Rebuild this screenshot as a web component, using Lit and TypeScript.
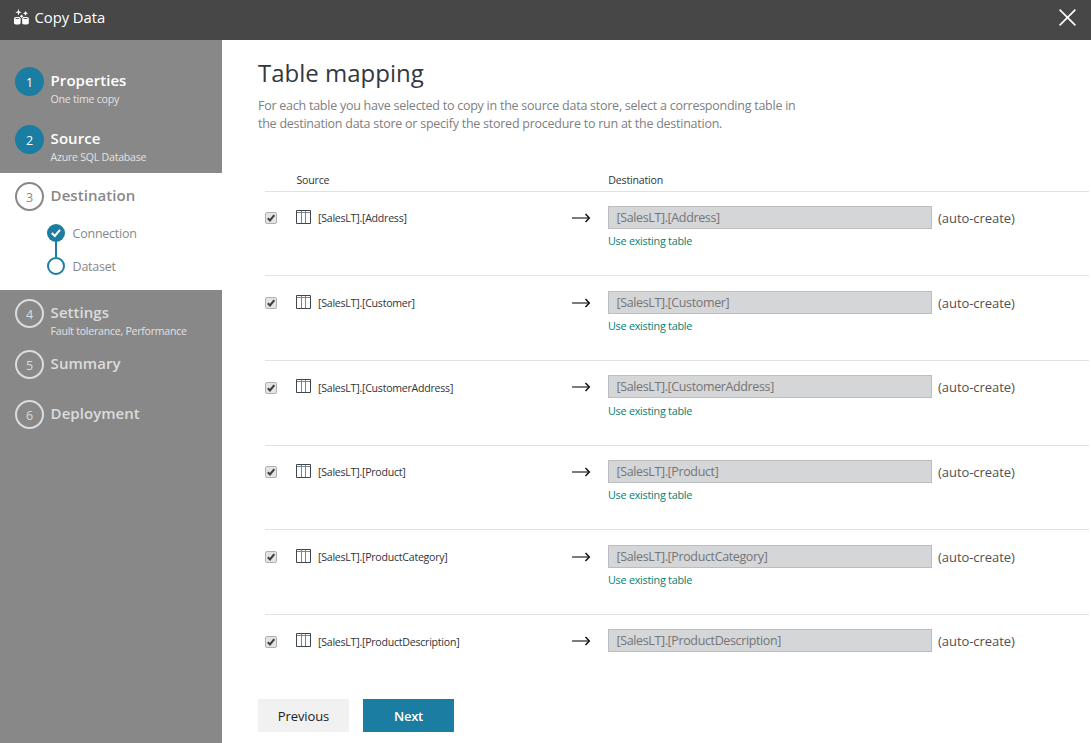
import { LitElement, html, css, svg, nothing } from "lit";
import { customElement, property } from "lit/decorators.js";
import { classMap } from "lit/directives/class-map.js";

interface Step {
  title: string;
  note?: string;
  state: "done" | "active" | "todo";
  size: string;
}

const STEPS: Step[] = [
  { title: "Properties", note: "One time copy", state: "done", size: "tall" },
  { title: "Source", note: "Azure SQL Database", state: "done", size: "medium" },
  { title: "Destination", state: "active", size: "open" },
  { title: "Settings", note: "Fault tolerance, Performance", state: "todo", size: "after" },
  { title: "Summary", state: "todo", size: "short" },
  { title: "Deployment", state: "todo", size: "short" },
];

const TABLES = ["Address", "Customer", "CustomerAddress", "Product", "ProductCategory", "ProductDescription"];

@customElement("wizard-steps")
export class WizardSteps extends LitElement {
  static styles = css`
    :host { display: block; background: #888; color: #fff; padding-top: 27px; box-sizing: border-box; }
    .step { display: flex; gap: 6.6px; padding-left: 15px; box-sizing: border-box; }
    .tall { height: 58px; }
    .medium { height: 48px; }
    .open { height: 117px; padding-top: 9px; background: #fff; color: #888; }
    .after { height: 60px; padding-top: 9px; }
    .short { height: 50px; }
    .todo { color: #dcdcdc; }
    .num {
      width: 29px; height: 29px; box-sizing: border-box; border-radius: 50%;
      border: 2px solid currentColor; font-size: 12.5px; line-height: 27px; text-align: center; flex: none;
    }
    .done .num { background: #1b7da1; border-color: #1b7da1; }
    .title { font-size: 15px; font-weight: 600; line-height: 20px; padding-top: 3px; letter-spacing: 0.05px; white-space: nowrap; }
    .note { font-size: 10.6px; line-height: 14px; padding-top: 2px; letter-spacing: -0.25px; color: #e2e2e2; white-space: nowrap; }
    .sub { display: flex; gap: 6.6px; margin: 18px 0 0 -4.6px; }
    .sub svg { display: block; flex: none; }
    .labels { font-size: 12.5px; letter-spacing: -0.25px; line-height: 33px; margin-top: -6px; }
  `;
  render() {
    return STEPS.map(
      (s, i) => html`<div class=${classMap({ step: true, [s.size]: true, [s.state]: true })}>
        <div class="num">${i + 1}</div>
        <div>
          <div class="title">${s.title}</div>
          ${s.note ? html`<div class="note">${s.note}</div>` : nothing}
          ${s.state === "active"
            ? html`<div class="sub">
                <svg width="20" height="53" viewBox="0 0 20 53" fill="none" stroke="#1b7da1" stroke-width="2">
                  <path d="M10 17V34" />
                  <circle cx="10" cy="10" r="9" fill="#1b7da1" stroke="none" />
                  <path d="M5.8 10l3 3 5.2-6.2" stroke="#fff" />
                  <circle cx="10" cy="43" r="8" fill="#fff" />
                </svg>
                <div class="labels"><div>Connection</div><div>Dataset</div></div>
              </div>`
            : nothing}
        </div>
      </div>`
    );
  }
}

@customElement("mapping-row")
export class MappingRow extends LitElement {
  @property() name = "";
  @property({ type: Boolean }) last = false;
  static styles = css`
    :host {
      display: grid; grid-template-columns: 31px 22px 254px 36px 324px 1fr; align-items: start;
      height: 84.667px; box-sizing: border-box; border-top: 1px solid #e2e2e2; padding-top: 14.35px;
      white-space: nowrap;
    }
    svg { display: block; }
    .check { margin-top: 6.2px; }
    .grid { margin-top: 4px; }
    .arrow { margin-top: 7.1px; }
    .src { font-size: 10.6px; letter-spacing: -0.25px; line-height: 24px; padding-top: 0.25px; color: #2f3439; }
    .field {
      height: 23px; box-sizing: border-box; border: 1px solid #bcbdc1; background: #d4d6d8; color: #757575;
      font-size: 12.5px; letter-spacing: -0.37px; line-height: 21px; padding-left: 7.5px; overflow: hidden;
    }
    .link { font-size: 10.8px; letter-spacing: -0.25px; line-height: 16px; margin-top: 4.2px; color: #008272; }
    .auto { font-size: 13px; line-height: 24px; padding-top: 0.15px; letter-spacing: -0.05px; padding-left: 6px; color: #505050; }
  `;
  render() {
    const label = `[SalesLT].[${this.name}]`;
    return html`
      <svg class="check" width="12" height="12" viewBox="0 0 12 12">
        <rect x=".5" y=".5" width="11" height="11" rx="1.5" fill="#e4e4e4" stroke="#b0b0b0" />
        <path d="M2.8 6.2L5 8.4L9.3 3.2" fill="none" stroke="#404040" stroke-width="2.1" />
      </svg>
      <svg class="grid" width="15" height="14" viewBox="0 0 15 14" fill="none">
        <path d="M5.5 1V13M9.5 1V13" stroke="#7d858c" />
        <path d="M.5 .5H14.5V13.5H.5Z" stroke="#3c4750" />
        <path d="M1 2.5H14" stroke="#7d858c" />
      </svg>
      <div class="src">${label}</div>
      <svg class="arrow" width="19" height="10" viewBox="0 0 19 10" fill="none">
        <path d="M0 5H17" stroke="#333" stroke-width="1.3" />
        <path d="M13.5 1L17.3 5L13.5 9" stroke="#111" stroke-width="1.5" />
      </svg>
      <div>
        <div class="field">${label}</div>
        ${this.last ? nothing : html`<div class="link">Use existing table</div>`}
      </div>
      <div class="auto">(auto-create)</div>
    `;
  }
}

const sparkle = (x: number, y: number, r: number) =>
  svg`<path d="M${x} ${y - r}L${x + 0.8} ${y - 0.8}L${x + r} ${y}L${x + 0.8} ${y + 0.8}L${x} ${y + r}L${x - 0.8} ${y + 0.8}L${x - r} ${y}L${x - 0.8} ${y - 0.8}Z"/>`;

@customElement("app-root")
export class AppRoot extends LitElement {
  static styles = css`
    :host {
      display: grid; grid-template: 40px 1fr / 222px 1fr; width: 1091px; height: 743px; overflow: hidden;
      background: #fff; font-family: "Open Sans", "Noto Sans", sans-serif;
    }
    header {
      grid-column: 1 / 3; display: flex; align-items: center; background: #474747; color: #fff;
      padding: 0 15px 0 14px; box-sizing: border-box;
    }
    header svg { display: block; }
    .name { font-size: 14.8px; line-height: 20px; margin: -7px auto 0 5.6px; letter-spacing: -0.05px; }
    .logo { margin-top: -7px; }
    .close { margin-top: -6px; }
    main { padding: 18px 0 0 36px; min-width: 0; white-space: nowrap; }
    h1 { margin: 0; font-size: 24px; font-weight: 400; line-height: 30px; color: #33383e; }
    .intro { font-size: 12.5px; line-height: 18px; letter-spacing: -0.25px; margin-top: 9px; color: #808080; }
    .table { margin: 39.7px 2px 0 7px; height: 526.3px; }
    .head { display: flex; height: 18px; font-size: 10.6px; line-height: 14px; letter-spacing: -0.2px; color: #2f3439; padding-left: 31.5px; box-sizing: border-box; }
    .head div { width: 311.8px; }
    .buttons { display: flex; gap: 14px; }
    .btn { width: 91px; height: 33px; line-height: 34px; text-align: center; font-size: 13px; letter-spacing: -0.1px; background: #f1f1f1; color: #222; }
    .primary { background: #1b7da1; color: #fff; font-weight: 600; letter-spacing: -0.3px; }
  `;
  render() {
    return html`
      <header>
        <svg class="logo" width="15" height="16" viewBox="0 0 15 16" fill="#fff">
          ${sparkle(4.5, 3.2, 3.2)}${sparkle(11.5, 4.4, 2.4)}${sparkle(7.6, 7.2, 1.8)}
          <path d="M0 9.3C0 7.6 6.6 7.6 6.6 9.3V14.2C6.6 16 0 16 0 14.2ZM8.2 9.3C8.2 7.6 14.8 7.6 14.8 9.3V14.2C14.8 16 8.2 16 8.2 14.2Z" />
          <path d="M.9 9.5C2 10.3 4.6 10.3 5.7 9.5C4.6 8.8 2 8.8 .9 9.5ZM9.1 9.5C10.2 10.3 12.8 10.3 13.9 9.5C12.8 8.8 10.2 8.8 9.1 9.5Z" fill="#474747" />
        </svg>
        <div class="name">Copy Data</div>
        <svg class="close" width="17" height="17" viewBox="0 0 17 17" fill="none" stroke="#fff" stroke-width="1.6">
          <path d="M.6 .6L16.4 16.4M16.4 .6L.6 16.4" />
        </svg>
      </header>
      <wizard-steps></wizard-steps>
      <main>
        <h1>Table mapping</h1>
        <div class="intro">
          For each table you have selected to copy in the source data store, select a corresponding table in<br />
          the destination data store or specify the stored procedure to run at the destination.
        </div>
        <div class="table">
          <div class="head"><div>Source</div><div>Destination</div></div>
          ${TABLES.map((t, i) => html`<mapping-row .name=${t} .last=${i === TABLES.length - 1}></mapping-row>`)}
        </div>
        <div class="buttons">
          <div class="btn">Previous</div>
          <div class="btn primary">Next</div>
        </div>
      </main>
    `;
  }
}
